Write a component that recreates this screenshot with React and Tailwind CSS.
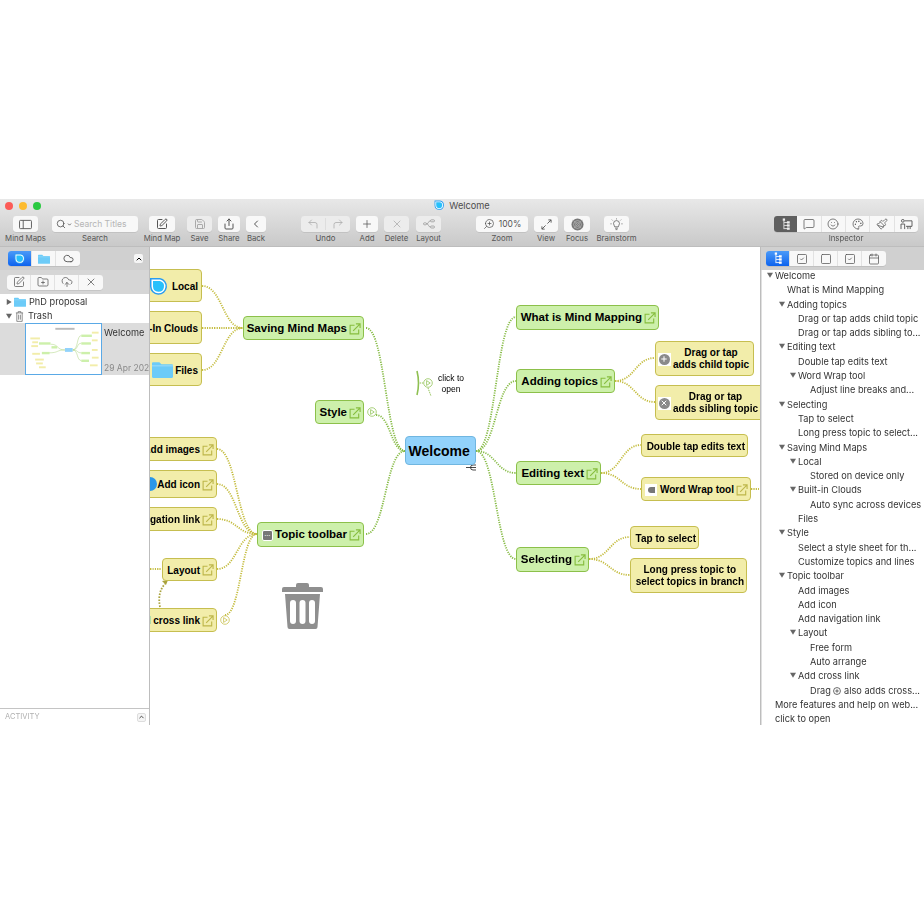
import {
  ChevronLeft,
  ChevronUp,
  CloudUpload,
  CornerUpLeft,
  CornerUpRight,
  FolderPlus,
  MessageSquare,
  Palette,
  Paintbrush,
  Plus,
  Save,
  Search,
  Share,
  Smile,
  Square,
  SquareCheck,
  SquarePen,
  Calendar,
  X,
  ZoomIn,
  Cloud,
  ChevronDown,
} from "lucide-react";

const ui = "font-['Inter',sans-serif]";
const mapFont = "font-['Liberation_Sans',Arial,sans-serif]";

// Drop shaped app logo
function Logo({ className }) {
  return (
    <svg viewBox="0 0 20 20" className={className}>
      <path d="M1 1h10a8.500 8.500 0 1 1-10 8.500z" fill="#2a9df0" />
      <path d="M2.500 2.500h8.500a7 7 0 1 1-8.500 7z" fill="#fff" />
      <path d="M4 4h7a5.500 5.500 0 1 1-7 5.500z" fill="#27c0fb" />
    </svg>
  );
}

function TreeIcon({ color = "#555" }) {
  return (
    <svg viewBox="0 0 12 14" className="w-[12px] h-[13px]" fill={color}>
      <rect x="2.500" y="0.500" width="2.500" height="2.500" />
      <rect x="3.300" y="3" width="0.900" height="9" />
      <rect x="4" y="4.500" width="4" height="0.900" />
      <rect x="4" y="7.500" width="4" height="0.900" />
      <rect x="4" y="11" width="4" height="0.900" />
      <rect x="7" y="3.500" width="3" height="2.500" />
      <rect x="7" y="6.800" width="3" height="2.500" />
      <rect x="7" y="10.200" width="3" height="2.500" />
    </svg>
  );
}

function FolderIcon({ className }) {
  return (
    <svg viewBox="0 0 20 16" className={className}>
      <path d="M0 2a1 1 0 0 1 1-1h6l2 2h10a1 1 0 0 1 1 1v11a1 1 0 0 1-1 1H1a1 1 0 0 1-1-1z" fill="#6ccbf8" />
      <rect x="0" y="4" width="20" height="1" fill="#9bdcfb" />
    </svg>
  );
}

function LinkIcon({ yellow }) {
  const c = yellow ? "#bdb64a" : "#86bd3e";
  return (
    <svg viewBox="0 0 13 13" className="w-[12px] h-[12px] shrink-0" fill="none" stroke={c} strokeWidth="1.200">
      <path d="M6 2.500H1.200v9.300h9.300V7" />
      <path d="M4.500 8.500 11.500 1.500M7.500 1h4.500v4.500" />
    </svg>
  );
}

function Marker({ className, yellow }) {
  return (
    <svg
      viewBox="0 0 10 10"
      className={`absolute w-[10px] h-[10px] ${className}`}
      fill="none"
      stroke={yellow ? "#c9c252" : "#93c45a"}
      strokeWidth="0.800"
    >
      <circle cx="5" cy="5" r="4.300" fill="#fff" />
      <path d="M3.600 2.600 7.200 5 3.600 7.400z" />
    </svg>
  );
}

function Node({ color = "yellow", className, children, link, textClass = "text-[10px]" }) {
  const colors = {
    green: "bg-[#cdf0ab] border-[#8cc04a]",
    yellow: "bg-[#f2edaa] border-[#c6be50]",
    blue: "bg-[#92d2fb] border-[#70b6e0]",
  };
  return (
    <div
      className={`absolute flex items-center justify-end gap-[2px] border-[1.500px] rounded-[4px] font-bold text-black whitespace-nowrap pt-[1px] pr-[2px] ${mapFont} ${textClass} ${colors[color]} ${className}`}
    >
      {children}
      {link && <LinkIcon yellow={color === "yellow"} />}
    </div>
  );
}

function RoundGlyph({ children }) {
  return (
    <span className="mr-auto ml-[2px] w-[13px] h-[13px] bg-white flex items-center justify-center">
      <span className="w-[11px] h-[11px] rounded-full bg-[#8a8a8a] text-white flex items-center justify-center">{children}</span>
    </span>
  );
}

function edge(x1, y1, x2, y2) {
  const mid = (x1 + x2) / 2;
  return `M${x1} ${y1}C${mid} ${y1} ${mid} ${y2} ${x2} ${y2}`;
}

const greenEdges = [
  [216, 81, 255, 204],
  [226, 168, 255, 204],
  [216, 287, 255, 204],
  [326, 204, 366, 70],
  [326, 204, 366, 134],
  [326, 204, 366, 226],
  [326, 204, 366, 312],
];

const yellowEdges = [
  [52, 39, 93, 81],
  [52, 81, 93, 81],
  [52, 123, 93, 81],
  [67, 202, 107, 287],
  [67, 237, 107, 287],
  [67, 272, 107, 287],
  [67, 322, 107, 287],
  [75, 368, 107, 287],
  [465, 134, 505, 111],
  [465, 134, 505, 155],
  [451, 226, 491, 198],
  [451, 226, 491, 242],
  [439, 312, 480, 290],
  [439, 312, 480, 328],
  [601, 242, 609, 242],
  [0, 322, 12, 322],
];

function MindMap() {
  return (
    <div className="flex-1 relative overflow-hidden bg-white">
      <svg viewBox="0 0 610 478" className="absolute inset-0 w-full h-full" fill="none">
        {greenEdges.map((e, i) => (
          <path key={i} d={edge(...e)} stroke="#86bb45" strokeWidth="1.800" strokeDasharray="1.200 1.200" />
        ))}
        {yellowEdges.map((e, i) => (
          <path key={i} d={edge(...e)} stroke="#c4bc3e" strokeWidth="1.800" strokeDasharray="1.200 1.200" />
        ))}
        {/* cross link arrow */}
        <path d="M10 360C8 350 10 342 15 337" stroke="#a9a23c" strokeWidth="1.800" strokeDasharray="1.600 1.400" />
        <path d="M12 334l6-1-2 5z" fill="#a9a23c" />
        {/* collapsed bracket */}
        <path d="M267 124q3 12 0 24" stroke="#8fc052" strokeWidth="1.600" />
        <path d="M268 136h6M278 141l3 8" stroke="#8fc052" strokeWidth="1" strokeDasharray="1.200 0.800" />
        {/* tiny mark under the root */}
        <path d="M316 220.500h6M326 218h-3a2.500 2.500 0 0 0 0 5h3M321 220.500h5" stroke="#333" strokeWidth="0.900" />
      </svg>

      <Node className="left-[-40px] top-[22px] w-[92px] h-[33px] pr-[3px]">
        <Logo className="absolute left-[38px] top-[7px] w-[20px] h-[20px]" />
        Local
      </Node>
      <Node className="left-[-40px] top-[64px] w-[92px] h-[33px] pr-[3px]">Built-In Clouds</Node>
      <Node className="left-[-40px] top-[106px] w-[92px] h-[33px] pr-[3px]">
        <FolderIcon className="absolute left-[41px] top-[7px] w-[21px] h-[17px]" />
        Files
      </Node>
      <Node color="green" link textClass="text-[11.500px]" className="left-[93px] top-[69px] w-[121px] h-[24px]">
        Saving Mind Maps
      </Node>
      <Node color="green" link textClass="text-[11.500px]" className="left-[165px] top-[153px] w-[49px] h-[24px]">
        Style
      </Node>
      <Marker className="left-[217px] top-[160px]" />
      <Node color="blue" textClass="text-[14px]" className="left-[255px] top-[189px] w-[71px] h-[29px] justify-start pl-[2.500px] pr-0">
        Welcome
      </Node>

      <div className={`absolute left-[251px] top-[126px] w-[100px] text-center text-[8.500px] leading-[10.500px] text-black ${mapFont}`}>
        click to
        <br />
        open
      </div>
      <Marker className="left-[273px] top-[131px]" />

      <Node link className="left-[-40px] top-[190px] w-[107px] h-[24px]">Add images</Node>
      <Node link className="left-[-40px] top-[223px] w-[107px] h-[28px]">
        <span className="absolute left-[32px] top-[6px] w-[14px] h-[14px] rounded-full bg-[#2a97ea]" />
        Add icon
      </Node>
      <Node link className="left-[-40px] top-[260px] w-[107px] h-[24px]">Add navigation link</Node>
      <Node link className="left-[12px] top-[311px] w-[55px] h-[23px]">Layout</Node>
      <Node link className="left-[-40px] top-[361px] w-[107px] h-[24px]">Add cross link</Node>
      <Marker yellow className="left-[70px] top-[368px]" />
      <Node color="green" link textClass="text-[11.500px]" className="left-[107px] top-[275px] w-[107px] h-[25px]">
        <span className="w-[11px] h-[11px] rounded-[2px] bg-[#777] flex items-center justify-center text-[6px] leading-none text-white border border-white">
          ···
        </span>
        Topic toolbar
      </Node>

      {/* Trash can floating over the map */}
      <svg viewBox="0 0 41 46" className="absolute left-[132px] top-[336px] w-[41px] h-[46px]" fill="#8f8f8f">
        <path d="M14 4V2a2 2 0 0 1 2-2h9a2 2 0 0 1 2 2v2h12a2 2 0 0 1 2 2v3H0V6a2 2 0 0 1 2-2z" />
        <path d="M3 11h35l-2.500 33a2 2 0 0 1-2 2H7.500a2 2 0 0 1-2-2z" />
        <rect x="8" y="17" width="6" height="24" rx="3" fill="#fff" />
        <rect x="17.500" y="17" width="6" height="24" rx="3" fill="#fff" />
        <rect x="27" y="17" width="6" height="24" rx="3" fill="#fff" />
      </svg>

      <Node color="green" link textClass="text-[11.500px]" className="left-[366px] top-[58px] w-[143px] h-[25px]">
        What is Mind Mapping
      </Node>
      <Node color="green" link textClass="text-[11.500px]" className="left-[366px] top-[122px] w-[99px] h-[24px]">
        Adding topics
      </Node>
      <Node className="left-[505px] top-[94px] w-[99px] h-[35px] text-center leading-[12px] pr-[4px]">
        <RoundGlyph>
          <Plus className="w-[8px] h-[8px]" strokeWidth={3} />
        </RoundGlyph>
        <span>Drag or tap<br />adds child topic</span>
      </Node>
      <Node className="left-[505px] top-[138px] w-[110px] h-[35px] text-center leading-[12px] pr-[6px]">
        <RoundGlyph>
          <X className="w-[8px] h-[8px]" strokeWidth={3} />
        </RoundGlyph>
        <span>Drag or tap<br />adds sibling topic</span>
      </Node>
      <Node className="left-[491px] top-[187px] w-[107px] h-[23px] justify-center pr-0">Double tap edits text</Node>
      <Node color="green" link textClass="text-[11.500px]" className="left-[366px] top-[214px] w-[85px] h-[24px]">
        Editing text
      </Node>
      <Node link className="left-[491px] top-[230px] w-[110px] h-[24px]">
        <span className="mr-auto ml-[3px] w-[12px] h-[12px] bg-white flex items-center">
          <span className="block w-[7px] h-[6px] ml-[3px] bg-[#777] rounded-l-[3px]" />
        </span>
        Word Wrap tool
      </Node>
      <Node className="left-[480px] top-[279px] w-[69px] h-[23px] justify-center pr-[1px]">Tap to select</Node>
      <Node className="left-[480px] top-[311px] w-[117px] h-[35px] justify-center pr-[2px] text-center leading-[12px]">
        <span>
          Long press topic to
          <br />
          select topics in branch
        </span>
      </Node>
      <Node color="green" link textClass="text-[11.500px]" className="left-[366px] top-[300px] w-[73px] h-[25px]">
        Selecting
      </Node>
    </div>
  );
}

function ToolItem({ label, className, children, disabled }) {
  return (
    <div className={`flex flex-col items-center shrink-0 ${className}`}>
      <div
        className={`w-full h-[16px] rounded-[3px] flex items-center justify-center shadow-[0_0.5px_0.5px_rgba(0,0,0,0.15)] ${
          disabled ? "bg-[#ececec] text-[#aaa]" : "bg-[#f8f8f8] text-[#555]"
        }`}
      >
        {children}
      </div>
      <span className="text-[7.800px] leading-[12px] text-[#555] whitespace-nowrap">{label}</span>
    </div>
  );
}

const icon = "w-[12px] h-[12px]";

function Toolbar() {
  return (
    <div className={`h-[48px] shrink-0 bg-gradient-to-b from-[#e8e8e8] to-[#c9c9c9] border-b border-[#bdbdbd] ${ui}`}>
      <div className="h-[13px] mb-[4px] grid grid-cols-[1fr_auto_1fr] items-center">
        <div className="flex gap-[6px] pl-[5px]">
          <span className="w-[8px] h-[8px] rounded-full bg-[#fc5b57]" />
          <span className="w-[8px] h-[8px] rounded-full bg-[#fdbb2e]" />
          <span className="w-[8px] h-[8px] rounded-full bg-[#2ac940]" />
        </div>
        <div className="flex items-center gap-[4px] text-[9.200px] text-[#4d4d4d]">
          <Logo className="w-[11px] h-[11px]" />
          Welcome
        </div>
      </div>
      <div className="flex items-start pl-[13px]">
        <ToolItem label="Mind Maps" className="w-[25px]">
          <svg viewBox="0 0 14 12" className="w-[13px] h-[11px]" fill="none" stroke="#555">
            <rect x="0.500" y="1.500" width="13" height="9" rx="1" />
            <path d="M4.500 1.500v9" />
          </svg>
        </ToolItem>
        <ToolItem label="Search" className="w-[86px] ml-[14px]">
          <div className="w-full flex items-center pl-[4px] gap-[1px]">
            <Search className="w-[10px] h-[10px]" />
            <ChevronDown className="w-[5px] h-[5px]" strokeWidth={4} />
            <span className="ml-[1px] text-[8.500px] text-[#b5b5b5]">Search Titles</span>
          </div>
        </ToolItem>
        <ToolItem label="Mind Map" className="w-[26px] ml-[11px]">
          <SquarePen className={icon} />
        </ToolItem>
        <ToolItem label="Save" className="w-[25px] ml-[12px]" disabled>
          <Save className={icon} />
        </ToolItem>
        <ToolItem label="Share" className="w-[22px] ml-[6px]">
          <Share className={icon} />
        </ToolItem>
        <ToolItem label="Back" className="w-[20px] ml-[6px]">
          <ChevronLeft className={icon} />
        </ToolItem>
        <ToolItem label="Undo" className="w-[49px] ml-[35px]" disabled>
          <div className="flex w-full">
            <span className="flex-1 flex justify-center border-r border-[#ddd]">
              <CornerUpLeft className={icon} strokeWidth={1.500} />
            </span>
            <span className="flex-1 flex justify-center">
              <CornerUpRight className={icon} strokeWidth={1.500} />
            </span>
          </div>
        </ToolItem>
        <ToolItem label="Add" className="w-[22px] ml-[6px]">
          <Plus className={icon} strokeWidth={1.500} />
        </ToolItem>
        <ToolItem label="Delete" className="w-[25px] ml-[6px]" disabled>
          <X className={icon} strokeWidth={1.500} />
        </ToolItem>
        <ToolItem label="Layout" className="w-[25px] ml-[7px]" disabled>
          <svg viewBox="0 0 12 10" className="w-[12px] h-[10px]" fill="none" stroke="#999" strokeWidth="0.800">
            <rect x="0.500" y="3.800" width="3" height="2" rx="1" />
            <rect x="7.500" y="0.800" width="4" height="2" rx="1" />
            <rect x="7.500" y="7" width="4" height="2" rx="1" />
            <path d="M3.500 4.800C6 4.800 5 1.800 7.500 1.800M3.500 4.800C6 4.800 5 8 7.500 8" />
          </svg>
        </ToolItem>
        <ToolItem label="Zoom" className="w-[52px] ml-[35px]">
          <ZoomIn className="w-[12px] h-[12px] -scale-x-100" strokeWidth={1.500} />
          <span className="ml-[4px] text-[8.500px]">100%</span>
        </ToolItem>
        <ToolItem label="View" className="w-[24px] ml-[6px]">
          <svg viewBox="0 0 12 12" className="w-[11px] h-[11px]" fill="none" stroke="#555">
            <path d="M7 5l4-4M8 1h3v3M5 7l-4 4M1 8v3h3" />
          </svg>
        </ToolItem>
        <ToolItem label="Focus" className="w-[26px] ml-[6px]">
          <svg viewBox="0 0 14 14" className="w-[13px] h-[13px]" fill="none">
            <circle cx="7" cy="7" r="6.500" fill="#777" />
            <circle cx="7" cy="7" r="4.200" stroke="#bbb" strokeWidth="0.800" />
            <circle cx="7" cy="7" r="2" stroke="#bbb" strokeWidth="0.800" />
            <path d="M2 2l10 10M12 2L2 12" stroke="#aaa" strokeWidth="0.700" />
          </svg>
        </ToolItem>
        <ToolItem label="Brainstorm" className="w-[25px] ml-[14px]">
          <svg viewBox="0 0 14 14" className="w-[13px] h-[13px]" fill="none" stroke="#555" strokeWidth="0.800">
            <path d="M5 9.500C5 8 3.800 7.500 3.800 6a3.200 3.200 0 0 1 6.400 0c0 1.500-1.200 2-1.200 3.500zM5.500 11h3M6 12.500h2" />
            <path d="M7 .5V1.500M2 1.800l.8.8M12 1.800l-.8.8M.5 6.300h1.200M12.300 6.300h1.200" />
          </svg>
        </ToolItem>
        <ToolItem label="Inspector" className="w-[144px] ml-[145px]">
          <div className="flex w-full h-full">
            <span className="flex-1 flex items-center justify-center bg-[#5f5f5f] rounded-l-[3px]">
              <TreeIcon color="#eee" />
            </span>
            {[MessageSquare, Smile, Palette, Paintbrush].map((I, i) => (
              <span key={i} className="flex-1 flex items-center justify-center border-r border-[#e2e2e2]">
                <I className={icon} strokeWidth={1.500} />
              </span>
            ))}
            <span className="flex-1 flex items-center justify-center">
              <svg viewBox="0 0 14 12" className="w-[13px] h-[11px]" fill="none" stroke="#555">
                <circle cx="3" cy="2" r="1.500" />
                <path d="M1 11V5.500h4v5.500M5 2h8v6H6.500M8.500 8v3M11 8v3" />
              </svg>
            </span>
          </div>
        </ToolItem>
      </div>
    </div>
  );
}

function Segments({ className = "", children }) {
  return <div className={`flex h-[15px] rounded-[3px] bg-[#f8f8f8] overflow-hidden shadow-[0_0.5px_0.5px_rgba(0,0,0,0.15)] ${className}`}>{children}</div>;
}

function Seg({ active, children }) {
  return (
    <span
      className={`w-[24px] flex items-center justify-center border-r border-[#e2e2e2] last:border-r-0 ${
        active ? "bg-gradient-to-b from-[#4a9af8] to-[#0a62ee] text-white" : "text-[#555]"
      }`}
    >
      {children}
    </span>
  );
}

function Caret({ open }) {
  return (
    <svg viewBox="0 0 8 8" className="w-[6px] h-[6px] shrink-0" fill="#666">
      {open ? <path d="M0 1h8L4 7.500z" /> : <path d="M1 0l6.500 4L1 8z" />}
    </svg>
  );
}

function Thumbnail() {
  return (
    <svg viewBox="0 0 77 52" className="w-[77px] h-[52px] bg-white border border-[#5aa9e6] shrink-0" fill="none">
      <path d="M25 21C34 21 31 27 40 27M23 30C34 30 31 27 40 27M48 27C54 27 52 12 57 12M48 27C54 27 52 20 57 20M48 27C54 27 52 30 57 30M48 27C54 27 52 38 57 38" stroke="#a8d078" strokeWidth="0.500" />
      <rect x="30" y="4" width="20" height="2" fill="#bbb" />
      <rect x="40" y="25" width="8" height="4" fill="#92d2fb" />
      {[[13, 19, 12], [26, 23, 6], [16, 29, 8], [57, 11, 11], [57, 19, 10], [57, 29, 9], [57, 37, 8]].map(([x, y, w], i) => (
        <rect key={i} x={x} y={y} width={w} height="2.500" fill="#cdf0ab" />
      ))}
      {[[4, 14, 10], [6, 18, 6], [5, 22, 7], [6, 30, 8], [9, 36, 9], [10, 40, 7], [13, 44, 7], [68, 8, 7], [68, 16, 6], [68, 26, 6], [68, 34, 7], [66, 42, 8]].map(([x, y, w], i) => (
        <rect key={i} x={x} y={y} width={w} height="2" fill="#f2edaa" />
      ))}
    </svg>
  );
}

function LeftPanel() {
  return (
    <div className={`w-[150px] shrink-0 flex flex-col bg-white border-r border-[#bdbdbd] ${ui}`}>
      <div className="h-[23px] shrink-0 flex items-center justify-between pl-[8px] pr-[6px] bg-[#d0d0d0]">
        <Segments>
          <Seg active>
            <Logo className="w-[12px] h-[12px]" />
          </Seg>
          <Seg>
            <FolderIcon className="w-[12px] h-[10px]" />
          </Seg>
          <Seg>
            <Cloud className="w-[11px] h-[11px]" />
          </Seg>
        </Segments>
        <span className="w-[9px] h-[9px] rounded-[2px] bg-[#f5f5f5] flex items-center justify-center">
          <ChevronUp className="w-[8px] h-[8px]" strokeWidth={3} />
        </span>
      </div>
      <div className="h-[24px] shrink-0 flex items-center pl-[7px] bg-[#d6d6d6]">
        <Segments>
          <Seg>
            <SquarePen className={icon} strokeWidth={1.500} />
          </Seg>
          <Seg>
            <FolderPlus className={icon} strokeWidth={1.500} />
          </Seg>
          <Seg>
            <CloudUpload className={icon} strokeWidth={1.500} />
          </Seg>
          <Seg>
            <X className={icon} strokeWidth={1.500} />
          </Seg>
        </Segments>
      </div>
      <div className="text-[9.200px] text-[#333]">
        <div className="h-[15px] flex items-center pl-[6px]">
          <Caret />
          <FolderIcon className="w-[12px] h-[10px] ml-[2px]" />
          <span className="ml-[3px]">PhD proposal</span>
        </div>
        <div className="h-[14px] flex items-center pl-[6px]">
          <Caret open />
          <svg viewBox="0 0 10 12" className="w-[9px] h-[11px] ml-[3px]" fill="none" stroke="#666" strokeWidth="0.800">
            <path d="M1 2h8M3.500 2V.6h3V2M2 2v9.400h6V2M4 4v5.500M6 4v5.500" />
          </svg>
          <span className="ml-[4px]">Trash</span>
        </div>
        <div className="h-[52px] flex bg-[#dcdcdc] pl-[25px] overflow-hidden">
          <Thumbnail />
          <div className="pl-[2px] pt-[3px] flex flex-col justify-between whitespace-nowrap">
            <span>Welcome</span>
            <span className="text-[8.500px] text-[#8a8a8a]">29 Apr 2020</span>
          </div>
        </div>
      </div>
      <div className="mt-auto h-[17px] shrink-0 flex items-center justify-between pl-[5px] pr-[3px] border-t border-[#c4c4c4] text-[7.500px] text-[#b0b0b0]">
        ACTIVITY
        <span className="w-[9px] h-[9px] rounded-[2px] bg-[#f5f5f5] border border-[#ddd] flex items-center justify-center">
          <ChevronUp className="w-[8px] h-[8px] text-[#333]" strokeWidth={3} />
        </span>
      </div>
    </div>
  );
}

// depth, has caret, text
const outline = [
  [0, true, "Welcome"],
  [1, false, "What is Mind Mapping"],
  [1, true, "Adding topics"],
  [2, false, "Drag or tap adds child topic"],
  [2, false, "Drag or tap adds sibling to..."],
  [1, true, "Editing text"],
  [2, false, "Double tap edits text"],
  [2, true, "Word Wrap tool"],
  [3, false, "Adjust line breaks and..."],
  [1, true, "Selecting"],
  [2, false, "Tap to select"],
  [2, false, "Long press topic to select..."],
  [1, true, "Saving Mind Maps"],
  [2, true, "Local"],
  [3, false, "Stored on device only"],
  [2, true, "Built-in Clouds"],
  [3, false, "Auto sync across devices"],
  [2, false, "Files"],
  [1, true, "Style"],
  [2, false, "Select a style sheet for th..."],
  [2, false, "Customize topics and lines"],
  [1, true, "Topic toolbar"],
  [2, false, "Add images"],
  [2, false, "Add icon"],
  [2, false, "Add navigation link"],
  [2, true, "Layout"],
  [3, false, "Free form"],
  [3, false, "Auto arrange"],
  [2, true, "Add cross link"],
  [
    3,
    false,
    <>
      Drag{" "}
      <svg viewBox="0 0 10 10" className="inline w-[8px] h-[8px] align-[-1px]" fill="none" stroke="#333" strokeWidth="0.900">
        <circle cx="5" cy="5" r="4.300" />
        <path d="M5 2.800v4.400M2.800 5h4.400" />
      </svg>{" "}
      also adds cross...
    </>,
  ],
  [0, false, "More features and help on web..."],
  [0, false, "click to open"],
];

const indent = ["pl-[13px]", "pl-[25px]", "pl-[36px]", "pl-[48px]"];

function Inspector() {
  return (
    <div className={`w-[164px] shrink-0 flex flex-col border-l border-[#bdbdbd] ${ui}`}>
      <div className="h-[23px] shrink-0 flex items-center pl-[5px] bg-[#d0d0d0]">
        <Segments>
          <Seg active>
            <TreeIcon color="#fff" />
          </Seg>
          <Seg>
            <SquareCheck className={icon} strokeWidth={1.500} />
          </Seg>
          <Seg>
            <Square className={icon} strokeWidth={1.500} />
          </Seg>
          <Seg>
            <SquareCheck className={icon} strokeWidth={1.500} />
          </Seg>
          <Seg>
            <Calendar className={icon} strokeWidth={1.500} />
          </Seg>
        </Segments>
      </div>
      <div className="flex-1 bg-white overflow-hidden border-l border-[#e0e0e0] text-[9.200px] text-[#333]">
        <div className="-mt-[1px]">
          {outline.map(([depth, open, text], i) => (
            <div key={i} className={`relative h-[14.300px] leading-[14.300px] whitespace-nowrap ${indent[depth]}`}>
              {open && (
                <span className="absolute top-[3px] -ml-[8px]">
                  <Caret open />
                </span>
              )}
              {text}
            </div>
          ))}
        </div>
      </div>
    </div>
  );
}

export default function App() {
  return (
    <div className="h-[924px] bg-white pt-[199px]">
      <div className="h-[526px] flex flex-col overflow-hidden blur-[0.35px]">
        <Toolbar />
        <div className="flex-1 flex min-h-0">
          <LeftPanel />
          <MindMap />
          <Inspector />
        </div>
      </div>
    </div>
  );
}
